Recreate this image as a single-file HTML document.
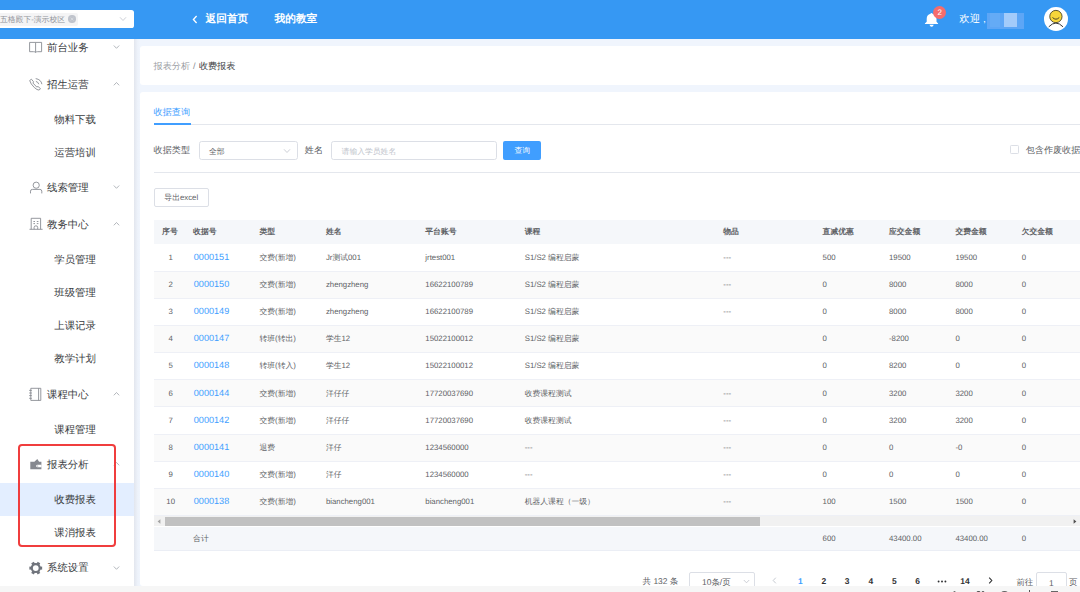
<!DOCTYPE html>
<html lang="zh">
<head>
<meta charset="utf-8">
<title>收费报表</title>
<style>
*{box-sizing:border-box;margin:0;padding:0}
html,body{text-rendering:geometricPrecision;width:1080px;height:592px;overflow:hidden;background:#f0f5fd;font-family:"Liberation Sans",sans-serif;color:#606266}
.abs{position:absolute}
#hdr{position:absolute;left:0;top:0;width:1080px;height:39px;background:#3698f3;z-index:10}
#side{position:absolute;left:0;top:0;width:134px;height:586px;background:#fff;overflow:hidden}
#shadow{position:absolute;left:134px;top:39px;width:6px;height:547px;background:linear-gradient(to right,#e2e6ee,#edf2fa 60%,#f0f5fd)}
#menu{position:absolute;left:0;top:28.5px;width:134px}
.mt{height:37.05px;line-height:37.05px;position:relative;font-size:10.4px;color:#3a3d42;padding-left:47px;padding-top:1px;white-space:nowrap}
.mi{height:33.15px;line-height:33.15px;position:relative;font-size:10.4px;color:#3a3d42;padding-left:54.3px;padding-top:1px;white-space:nowrap}
.mi.act{background:#e3eeff}
.mt svg.ic{position:absolute;left:28px;top:11.5px;width:15px;height:14px}
.mt svg.ar{position:absolute;left:113px;top:15.5px;width:7px;height:6px}
#redbox{position:absolute;left:18.2px;top:444.2px;width:97.6px;height:103.2px;border:2px solid #f03d3d;border-radius:4px;z-index:3}
.card{position:absolute;background:#fff;border-radius:3px 0 0 3px}
.t9{font-size:9.1px}
.t8{font-size:7.8px}
.nw{white-space:nowrap}
.row{position:absolute;left:153.5px;width:927px;height:27.09px}
.c{position:absolute;top:0;height:25.4px;line-height:25.4px;font-size:7.8px;color:#606266;white-space:nowrap}
.c.l{font-size:9.1px;color:#409eff}
.h{position:absolute;top:0;height:24px;line-height:23.5px;font-size:7.8px;color:#606266;font-weight:bold;white-space:nowrap}
.pg{position:absolute;top:571px;height:20px;line-height:20px;font-size:8.45px;font-weight:bold;color:#303133;width:20px;text-align:center}
</style>
</head>
<body>

<!-- sidebar -->
<div id="side">
 <div id="menu">
  <div class="mt">前台业务
   <svg class="ic" viewBox="0 0 15 14"><path d="M1.6 2.4H7.6V12.4Q7 11.7 5.6 11.7H1.6zM7.6 2.4H13.6V11.7H9.6Q8.2 11.7 7.6 12.4" fill="none" stroke="#82858c" stroke-width="0.85"/></svg>
   <svg class="ar" viewBox="0 0 7 6"><path d="M0.8 1.5L3.5 4.3L6.2 1.5" fill="none" stroke="#a0a4ab" stroke-width="0.8"/></svg>
  </div>
  <div class="mt">招生运营
   <svg class="ic" viewBox="0 0 15 14"><path d="M1.7 3.5L3.4 2.2L5.5 4.7L5 6.1L8.6 9.9L10.1 9.6L12.5 11.7L11 13.1Q9.3 13.2 6.3 10.5Q2.5 6.8 1.7 3.5zM7.9 4.4Q10.2 4.9 10.8 7.2M7.7 1.6Q13.1 2.5 13.9 7.2" fill="none" stroke="#82858c" stroke-width="0.85" stroke-linejoin="round"/></svg>
   <svg class="ar" viewBox="0 0 7 6"><path d="M0.8 4.3L3.5 1.5L6.2 4.3" fill="none" stroke="#a0a4ab" stroke-width="0.8"/></svg>
  </div>
  <div class="mi">物料下载</div>
  <div class="mi">运营培训</div>
  <div class="mt">线索管理
   <svg class="ic" viewBox="0 0 15 14"><circle cx="8.2" cy="5.2" r="3.1" fill="none" stroke="#82858c" stroke-width="0.85"/><path d="M2.5 13.4V11.2Q2.5 9.4 4.4 9.4H11.9Q13.8 9.4 13.8 11.2V13.4" fill="none" stroke="#82858c" stroke-width="0.85"/></svg>
   <svg class="ar" viewBox="0 0 7 6"><path d="M0.8 1.5L3.5 4.3L6.2 1.5" fill="none" stroke="#a0a4ab" stroke-width="0.8"/></svg>
  </div>
  <div class="mt">教务中心
   <svg class="ic" viewBox="0 0 15 14"><path d="M3.2 12.2V1.3H12.6V12.2M1.5 12.3H14.6M6.1 12.2V10.4Q6.1 8.8 7.9 8.8Q9.7 8.8 9.7 10.4V12.2M5.4 4.5h1.6M8.8 4.5h1.6M5.4 6.6h1.6M8.8 6.6h1.6" fill="none" stroke="#82858c" stroke-width="0.85"/></svg>
   <svg class="ar" viewBox="0 0 7 6"><path d="M0.8 4.3L3.5 1.5L6.2 4.3" fill="none" stroke="#a0a4ab" stroke-width="0.8"/></svg>
  </div>
  <div class="mi">学员管理</div>
  <div class="mi">班级管理</div>
  <div class="mi">上课记录</div>
  <div class="mi">教学计划</div>
  <div class="mt">课程中心
   <svg class="ic" viewBox="0 0 15 14"><path d="M2.8 1.3H12.8V13.4H2.8zM10.6 1.3V13.4M1.2 3.4h2.6M1.2 6h2.6M1.2 8.6h2.6M1.2 11.3h2.6" fill="none" stroke="#82858c" stroke-width="0.85"/></svg>
   <svg class="ar" viewBox="0 0 7 6"><path d="M0.8 4.3L3.5 1.5L6.2 4.3" fill="none" stroke="#a0a4ab" stroke-width="0.8"/></svg>
  </div>
  <div class="mi">课程管理</div>
  <div class="mt">报表分析
   <svg class="ic" viewBox="0 0 15 14"><path d="M2.3 4.7H13.4V12.3H2.3zM6.4 4.8L9.3 2L11.1 4.8z" fill="#85888f"/><path d="M13.5 7.7H9.5Q8.2 7.7 8.2 9Q8.2 10.3 9.5 10.3H13.5z" fill="#fff"/><circle cx="9.7" cy="9" r="0.6" fill="#85888f"/></svg>
   <svg class="ar" viewBox="0 0 7 6"><path d="M0.8 4.3L3.5 1.5L6.2 4.3" fill="none" stroke="#a0a4ab" stroke-width="0.8"/></svg>
  </div>
  <div class="mi act">收费报表</div>
  <div class="mi">课消报表</div>
  <div class="mt">系统设置
   <svg class="ic" viewBox="0 0 15 14"><g transform="translate(7.75,7.1)" fill="#70747c"><rect x="-1.5" y="-6.4" width="3" height="2.4" transform="rotate(30)"/><rect x="-1.5" y="-6.4" width="3" height="2.4" transform="rotate(90)"/><rect x="-1.5" y="-6.4" width="3" height="2.4" transform="rotate(150)"/><rect x="-1.5" y="-6.4" width="3" height="2.4" transform="rotate(210)"/><rect x="-1.5" y="-6.4" width="3" height="2.4" transform="rotate(270)"/><rect x="-1.5" y="-6.4" width="3" height="2.4" transform="rotate(330)"/><path d="M0 -5A5 5 0 1 0 0 5A5 5 0 1 0 0 -5zM0 -2.9A2.9 2.9 0 1 1 0 2.9A2.9 2.9 0 1 1 0 -2.9z" fill-rule="evenodd"/></g></svg>
   <svg class="ar" viewBox="0 0 7 6"><path d="M0.8 1.5L3.5 4.3L6.2 1.5" fill="none" stroke="#a0a4ab" stroke-width="0.8"/></svg>
  </div>
 </div>
 <div id="redbox"></div>
</div>
<div id="shadow"></div>

<!-- header -->
<div id="hdr">
 <div class="abs" style="left:-4px;top:10px;width:138px;height:18.3px;background:#fff;border-radius:2.6px"></div>
 <div class="abs nw t8" style="left:-4px;top:12.5px;width:82px;height:13.4px;line-height:13.4px;background:#f4f4f5;border-radius:2px;color:#909399;padding-left:4px">五格殿下-演示校区</div>
 <div class="abs" style="left:68.3px;top:15.3px;width:7.4px;height:7.4px;border-radius:50%;background:#c0c4cc"></div>
 <svg class="abs" style="left:69.9px;top:16.9px;width:4.2px;height:4.2px" viewBox="0 0 4 4"><path d="M0.7 0.7L3.3 3.3M3.3 0.7L0.7 3.3" stroke="#e4e5e8" stroke-width="0.6"/></svg>
 <svg class="abs" style="left:118.5px;top:16px;width:8px;height:6px" viewBox="0 0 8 6"><path d="M1 1.3L4 4.5L7 1.3" fill="none" stroke="#c0c4cc" stroke-width="0.8"/></svg>

 <svg class="abs" style="left:191.5px;top:15px;width:6px;height:9px" viewBox="0 0 6 9"><path d="M4.6 1L1.4 4.5L4.6 8" fill="none" stroke="#fff" stroke-width="1.3"/></svg>
 <div class="abs nw" style="left:205.5px;top:9px;height:20px;line-height:20px;font-size:10.7px;font-weight:bold;color:#fff">返回首页</div>
 <div class="abs nw" style="left:274.5px;top:9px;height:20px;line-height:20px;font-size:10.7px;font-weight:bold;color:#fff">我的教室</div>

 <!-- bell -->
 <svg class="abs" style="left:924px;top:12px;width:16px;height:16px" viewBox="0 0 16 16"><path d="M7.5 0.9Q8.3 0.9 8.5 1.8Q12.5 2.8 12.5 7V9.8L14.1 11.4V12.1H0.9V11.4L2.7 9.8V7Q2.7 2.8 6.5 1.8Q6.7 0.9 7.5 0.9z" fill="#fff"/><path d="M5.5 12.8H9.7Q9.3 14.7 7.6 14.7Q5.9 14.7 5.5 12.8z" fill="#fff"/></svg>
 <div class="abs" style="left:933.2px;top:5.6px;width:13.2px;height:13.2px;border-radius:50%;background:#f56c6c;color:#fff;font-size:8px;line-height:13.2px;text-align:center">2</div>
 <div class="abs nw" style="left:959.3px;top:10.2px;height:20px;line-height:20px;font-size:10.4px;color:#fff">欢迎 ,</div>
 <div class="abs" style="left:987px;top:13.4px;width:37px;height:15.2px;background:#5da6f6"></div>
 <div class="abs" style="left:990px;top:13.4px;width:10px;height:13.6px;background:#64abf6"></div>
 <div class="abs" style="left:1004px;top:13.4px;width:13px;height:13.6px;background:#a3cbfa"></div>
 <!-- avatar -->
 <div class="abs" style="left:1044px;top:7.2px;width:23.8px;height:23.8px;border-radius:50%;background:#fff;overflow:hidden">
  <svg style="position:absolute;left:0;top:0;width:23.8px;height:23.8px" viewBox="0 0 24 24"><circle cx="12" cy="9.6" r="6.2" fill="#f7d63a" stroke="#4a4326" stroke-width="0.9"/><path d="M8.6 10.6Q12 14 15.4 10.6" fill="none" stroke="#4a4326" stroke-width="1"/><path d="M4.8 20Q12 12.4 19.2 20" fill="none" stroke="#333" stroke-width="1"/></svg>
 </div>
</div>

<!-- breadcrumb card -->
<div class="card" style="left:140px;top:45.6px;width:940px;height:39.6px"></div>
<div class="abs nw t9" style="left:153.6px;top:56px;height:20px;line-height:20px"><span style="color:#9a9da3">报表分析</span><span style="color:#8a8d93;padding:0 3.4px 0 3px">/</span><span style="color:#3a3d42">收费报表</span></div>

<!-- main card -->
<div class="card" style="left:140px;top:92px;width:940px;height:494px"></div>

<!-- tabs -->
<div class="abs nw t9" style="left:153.6px;top:101.8px;height:20px;line-height:20px;color:#409eff">收据查询</div>
<div class="abs" style="left:153.5px;top:124.2px;width:927px;height:1.1px;background:#e4e7ed"></div>
<div class="abs" style="left:153.5px;top:123.4px;width:37.4px;height:1.8px;background:#409eff"></div>

<!-- form -->
<div class="abs nw t9" style="left:153.6px;top:141px;height:19.5px;line-height:19.5px;color:#606266">收据类型</div>
<div class="abs" style="left:199px;top:141px;width:99px;height:19px;border:1px solid #dcdfe6;border-radius:2.6px;background:#fff"></div>
<div class="abs nw t8" style="left:209px;top:141.5px;height:19.5px;line-height:19.5px;color:#606266">全部</div>
<svg class="abs" style="left:282.5px;top:148px;width:8px;height:6px" viewBox="0 0 8 6"><path d="M1 1.3L4 4.5L7 1.3" fill="none" stroke="#c0c4cc" stroke-width="0.8"/></svg>
<div class="abs nw t9" style="left:304.8px;top:141px;height:19.5px;line-height:19.5px;color:#606266">姓名</div>
<div class="abs" style="left:331px;top:141px;width:166px;height:19px;border:1px solid #dcdfe6;border-radius:2.6px;background:#fff"></div>
<div class="abs nw t8" style="left:341.6px;top:141.5px;height:19.5px;line-height:19.5px;color:#c0c4cc">请输入学员姓名</div>
<div class="abs nw t8" style="left:503.4px;top:141px;width:37.6px;height:19px;line-height:19.6px;background:#409eff;border-radius:2px;color:#fff;text-align:center">查询</div>
<div class="abs" style="left:1010px;top:145.2px;width:9.3px;height:9.3px;border:1px solid #dcdfe6;border-radius:1.3px;background:#fff"></div>
<div class="abs nw t9" style="left:1025.7px;top:141px;height:19.5px;line-height:19.5px;color:#606266">包含作废收据</div>
<div class="abs" style="left:153.5px;top:171.6px;width:927px;height:1px;background:#e4e7ed"></div>

<!-- export button -->
<div class="abs nw t8" style="left:153.5px;top:188.4px;width:55.5px;height:19px;line-height:18px;border:1px solid #dcdfe6;border-radius:2px;background:#fff;color:#606266;text-align:center">导出excel</div>

<!-- table header -->
<div class="abs" style="left:153.5px;top:220px;width:927px;height:24px;background:#f5f7fa">
 <div class="h" style="left:8.6px">序号</div>
 <div class="h" style="left:39.6px">收据号</div>
 <div class="h" style="left:106px">类型</div>
 <div class="h" style="left:172.4px">姓名</div>
 <div class="h" style="left:271.8px">平台账号</div>
 <div class="h" style="left:371.2px">课程</div>
 <div class="h" style="left:569.8px">物品</div>
 <div class="h" style="left:669.1px">直减优惠</div>
 <div class="h" style="left:735.5px">应交金额</div>
 <div class="h" style="left:801.9px">交费金额</div>
 <div class="h" style="left:868.2px">欠交金额</div>
</div>

<!-- rows -->
<!--ROWS-->
<div class="abs" style="left:153.5px;top:244px;width:927px;height:27px;background:#fff"></div>
<div class="abs" style="left:153.5px;top:271px;width:927px;height:1px;background:#eef0f6"></div>
<div class="abs" style="left:153.5px;top:272px;width:927px;height:26px;background:#fafafa"></div>
<div class="abs" style="left:153.5px;top:298px;width:927px;height:1px;background:#eef0f6"></div>
<div class="abs" style="left:153.5px;top:299px;width:927px;height:26px;background:#fff"></div>
<div class="abs" style="left:153.5px;top:325px;width:927px;height:1px;background:#eef0f6"></div>
<div class="abs" style="left:153.5px;top:326px;width:927px;height:26px;background:#fafafa"></div>
<div class="abs" style="left:153.5px;top:352px;width:927px;height:1px;background:#eef0f6"></div>
<div class="abs" style="left:153.5px;top:353px;width:927px;height:26px;background:#fff"></div>
<div class="abs" style="left:153.5px;top:379px;width:927px;height:1px;background:#eef0f6"></div>
<div class="abs" style="left:153.5px;top:380px;width:927px;height:26px;background:#fafafa"></div>
<div class="abs" style="left:153.5px;top:406px;width:927px;height:1px;background:#eef0f6"></div>
<div class="abs" style="left:153.5px;top:407px;width:927px;height:27px;background:#fff"></div>
<div class="abs" style="left:153.5px;top:434px;width:927px;height:1px;background:#eef0f6"></div>
<div class="abs" style="left:153.5px;top:435px;width:927px;height:26px;background:#fafafa"></div>
<div class="abs" style="left:153.5px;top:461px;width:927px;height:1px;background:#eef0f6"></div>
<div class="abs" style="left:153.5px;top:462px;width:927px;height:26px;background:#fff"></div>
<div class="abs" style="left:153.5px;top:488px;width:927px;height:1px;background:#eef0f6"></div>
<div class="abs" style="left:153.5px;top:489px;width:927px;height:26px;background:#fafafa"></div>
<div class="abs" style="left:153.5px;top:515px;width:927px;height:1px;background:#eef0f6"></div>
<div class="row" style="top:245.00px"><div class="c" style="left:0.7px;width:33px;text-align:center">1</div><div class="c l" style="left:40.3px">0000151</div><div class="c" style="left:106px">交费(新增)</div><div class="c" style="left:172.4px">Jr测试001</div><div class="c" style="left:271.8px">jrtest001</div><div class="c" style="left:371.2px">S1/S2 编程启蒙</div><div class="c" style="left:569.8px">---</div><div class="c" style="left:669.1px">500</div><div class="c" style="left:735.5px">19500</div><div class="c" style="left:801.9px">19500</div><div class="c" style="left:868.2px">0</div></div>
<div class="row" style="top:272.12px"><div class="c" style="left:0.7px;width:33px;text-align:center">2</div><div class="c l" style="left:40.3px">0000150</div><div class="c" style="left:106px">交费(新增)</div><div class="c" style="left:172.4px">zhengzheng</div><div class="c" style="left:271.8px">16622100789</div><div class="c" style="left:371.2px">S1/S2 编程启蒙</div><div class="c" style="left:569.8px">---</div><div class="c" style="left:669.1px">0</div><div class="c" style="left:735.5px">8000</div><div class="c" style="left:801.9px">8000</div><div class="c" style="left:868.2px">0</div></div>
<div class="row" style="top:299.24px"><div class="c" style="left:0.7px;width:33px;text-align:center">3</div><div class="c l" style="left:40.3px">0000149</div><div class="c" style="left:106px">交费(新增)</div><div class="c" style="left:172.4px">zhengzheng</div><div class="c" style="left:271.8px">16622100789</div><div class="c" style="left:371.2px">S1/S2 编程启蒙</div><div class="c" style="left:569.8px">---</div><div class="c" style="left:669.1px">0</div><div class="c" style="left:735.5px">8000</div><div class="c" style="left:801.9px">8000</div><div class="c" style="left:868.2px">0</div></div>
<div class="row" style="top:326.36px"><div class="c" style="left:0.7px;width:33px;text-align:center">4</div><div class="c l" style="left:40.3px">0000147</div><div class="c" style="left:106px">转班(转出)</div><div class="c" style="left:172.4px">学生12</div><div class="c" style="left:271.8px">15022100012</div><div class="c" style="left:371.2px">S1/S2 编程启蒙</div><div class="c" style="left:669.1px">0</div><div class="c" style="left:735.5px">-8200</div><div class="c" style="left:801.9px">0</div><div class="c" style="left:868.2px">0</div></div>
<div class="row" style="top:353.48px"><div class="c" style="left:0.7px;width:33px;text-align:center">5</div><div class="c l" style="left:40.3px">0000148</div><div class="c" style="left:106px">转班(转入)</div><div class="c" style="left:172.4px">学生12</div><div class="c" style="left:271.8px">15022100012</div><div class="c" style="left:371.2px">S1/S2 编程启蒙</div><div class="c" style="left:669.1px">0</div><div class="c" style="left:735.5px">8200</div><div class="c" style="left:801.9px">0</div><div class="c" style="left:868.2px">0</div></div>
<div class="row" style="top:380.60px"><div class="c" style="left:0.7px;width:33px;text-align:center">6</div><div class="c l" style="left:40.3px">0000144</div><div class="c" style="left:106px">交费(新增)</div><div class="c" style="left:172.4px">洋仔仔</div><div class="c" style="left:271.8px">17720037690</div><div class="c" style="left:371.2px">收费课程测试</div><div class="c" style="left:569.8px">---</div><div class="c" style="left:669.1px">0</div><div class="c" style="left:735.5px">3200</div><div class="c" style="left:801.9px">3200</div><div class="c" style="left:868.2px">0</div></div>
<div class="row" style="top:407.72px"><div class="c" style="left:0.7px;width:33px;text-align:center">7</div><div class="c l" style="left:40.3px">0000142</div><div class="c" style="left:106px">交费(新增)</div><div class="c" style="left:172.4px">洋仔仔</div><div class="c" style="left:271.8px">17720037690</div><div class="c" style="left:371.2px">收费课程测试</div><div class="c" style="left:569.8px">---</div><div class="c" style="left:669.1px">0</div><div class="c" style="left:735.5px">3200</div><div class="c" style="left:801.9px">3200</div><div class="c" style="left:868.2px">0</div></div>
<div class="row" style="top:434.84px"><div class="c" style="left:0.7px;width:33px;text-align:center">8</div><div class="c l" style="left:40.3px">0000141</div><div class="c" style="left:106px">退费</div><div class="c" style="left:172.4px">洋仔</div><div class="c" style="left:271.8px">1234560000</div><div class="c" style="left:371.2px">---</div><div class="c" style="left:569.8px">---</div><div class="c" style="left:669.1px">0</div><div class="c" style="left:735.5px">0</div><div class="c" style="left:801.9px">-0</div><div class="c" style="left:868.2px">0</div></div>
<div class="row" style="top:461.96px"><div class="c" style="left:0.7px;width:33px;text-align:center">9</div><div class="c l" style="left:40.3px">0000140</div><div class="c" style="left:106px">交费(新增)</div><div class="c" style="left:172.4px">洋仔</div><div class="c" style="left:271.8px">1234560000</div><div class="c" style="left:371.2px">---</div><div class="c" style="left:569.8px">---</div><div class="c" style="left:669.1px">0</div><div class="c" style="left:735.5px">0</div><div class="c" style="left:801.9px">0</div><div class="c" style="left:868.2px">0</div></div>
<div class="row" style="top:489.08px"><div class="c" style="left:0.7px;width:33px;text-align:center">10</div><div class="c l" style="left:40.3px">0000138</div><div class="c" style="left:106px">交费(新增)</div><div class="c" style="left:172.4px">biancheng001</div><div class="c" style="left:271.8px">biancheng001</div><div class="c" style="left:371.2px">机器人课程（一级）</div><div class="c" style="left:569.8px">---</div><div class="c" style="left:669.1px">100</div><div class="c" style="left:735.5px">1500</div><div class="c" style="left:801.9px">1500</div><div class="c" style="left:868.2px">0</div></div>
<!--/ROWS-->

<!-- h scrollbar -->
<div class="abs" style="left:153.5px;top:516px;width:927px;height:10.4px;background:#f1f1f1"></div>
<div class="abs" style="left:164.8px;top:517px;width:595.4px;height:8.7px;background:#c1c1c1"></div>
<svg class="abs" style="left:156.5px;top:519.2px;width:4px;height:5px" viewBox="0 0 4 5"><path d="M3.4 0.3L0.6 2.5L3.4 4.7z" fill="#a3a3a3"/></svg>
<svg class="abs" style="left:1072.5px;top:519.2px;width:4px;height:5px" viewBox="0 0 4 5"><path d="M0.6 0.3L3.4 2.5L0.6 4.7z" fill="#505050"/></svg>

<!-- sum row -->
<div class="abs" style="left:153.5px;top:526.5px;width:927px;height:24.6px;background:#f5f7fa;border-bottom:1px solid #ebeef5">
 <div class="c" style="left:39.6px;height:24.4px;line-height:24.6px">合计</div>
 <div class="c" style="left:669.1px;height:24.4px;line-height:24.6px">600</div>
 <div class="c" style="left:735.5px;height:24.4px;line-height:24.6px">43400.00</div>
 <div class="c" style="left:801.9px;height:24.4px;line-height:24.6px">43400.00</div>
 <div class="c" style="left:868.2px;height:24.4px;line-height:24.6px">0</div>
</div>

<!-- pagination -->
<div class="abs nw" style="left:642.6px;top:571px;height:20px;line-height:20px;font-size:8.45px;color:#606266">共 132 条</div>
<div class="abs" style="left:689.2px;top:572.3px;width:66px;height:19px;border:1px solid #dcdfe6;border-radius:2px;background:#fff"></div>
<div class="abs nw" style="left:702px;top:572px;height:20px;line-height:20px;font-size:8.45px;color:#606266">10条/页</div>
<svg class="abs" style="left:743px;top:578.6px;width:7px;height:5px" viewBox="0 0 7 5"><path d="M0.8 1L3.5 3.8L6.2 1" fill="none" stroke="#c0c4cc" stroke-width="0.8"/></svg>
<svg class="abs" style="left:772px;top:577px;width:5px;height:7px" viewBox="0 0 5 7"><path d="M3.8 0.7L1.2 3.5L3.8 6.3" fill="none" stroke="#c0c4cc" stroke-width="0.9"/></svg>
<div class="pg" style="left:790.4px;color:#409eff">1</div>
<div class="pg" style="left:813.8px">2</div>
<div class="pg" style="left:837.2px">3</div>
<div class="pg" style="left:860.8px">4</div>
<div class="pg" style="left:884.3px">5</div>
<div class="pg" style="left:907.7px">6</div>
<svg class="abs" style="left:936.5px;top:580px;width:10px;height:3px" viewBox="0 0 10 3"><circle cx="1.6" cy="1.5" r="0.95" fill="#303133"/><circle cx="5" cy="1.5" r="0.95" fill="#303133"/><circle cx="8.4" cy="1.5" r="0.95" fill="#303133"/></svg>
<div class="pg" style="left:954.9px">14</div>
<svg class="abs" style="left:988px;top:577px;width:5px;height:7px" viewBox="0 0 5 7"><path d="M1.2 0.7L3.8 3.5L1.2 6.3" fill="none" stroke="#303133" stroke-width="1.1"/></svg>
<div class="abs nw" style="left:1016.4px;top:572px;height:20px;line-height:20px;font-size:8.45px;color:#606266">前往</div>
<div class="abs" style="left:1036.2px;top:572.3px;width:30.4px;height:19px;border:1px solid #dcdfe6;border-radius:2px;background:#fff"></div>
<div class="abs nw" style="left:1036.2px;top:572.5px;width:30.4px;height:20px;line-height:20px;font-size:8.45px;color:#606266;text-align:center">1</div>
<div class="abs nw" style="left:1069px;top:572px;height:20px;line-height:20px;font-size:8.45px;color:#606266">页</div>

<!-- bottom strip -->
<div class="abs" style="left:0;top:586px;width:1080px;height:6px;background:#f6f6f6;z-index:20">
 <div class="abs" style="left:953px;top:5.2px;width:3px;height:3px;border-radius:50%;border:0.8px solid #555"></div>
 <div class="abs" style="left:976px;top:5.0px;width:4.5px;height:4px;border-radius:2px 2px 0 0;border:0.8px solid #555"></div>
 <div class="abs" style="left:980.5px;top:5.0px;width:4.5px;height:4px;border-radius:2px 2px 0 0;border:0.8px solid #555"></div>
 <div class="abs" style="left:1001px;top:5.2px;width:7px;height:3px;border-radius:3px 3px 0 0;background:#666"></div>
 <div class="abs" style="left:1028.6px;top:4.2px;width:1.2px;height:4px;background:#555"></div>
 <div class="abs" style="left:1026px;top:5.8px;width:6px;height:0.9px;background:#666"></div>
 <div class="abs" style="left:1051px;top:5.4px;width:7px;height:3px;border-top:1.5px solid #666;border-left:0.9px solid #666"></div>
 <div class="abs" style="left:1076px;top:5.6px;width:5px;height:3px;border-radius:3px 0 0 0;border:0.8px solid #555"></div>
</div>

</body>
</html>
